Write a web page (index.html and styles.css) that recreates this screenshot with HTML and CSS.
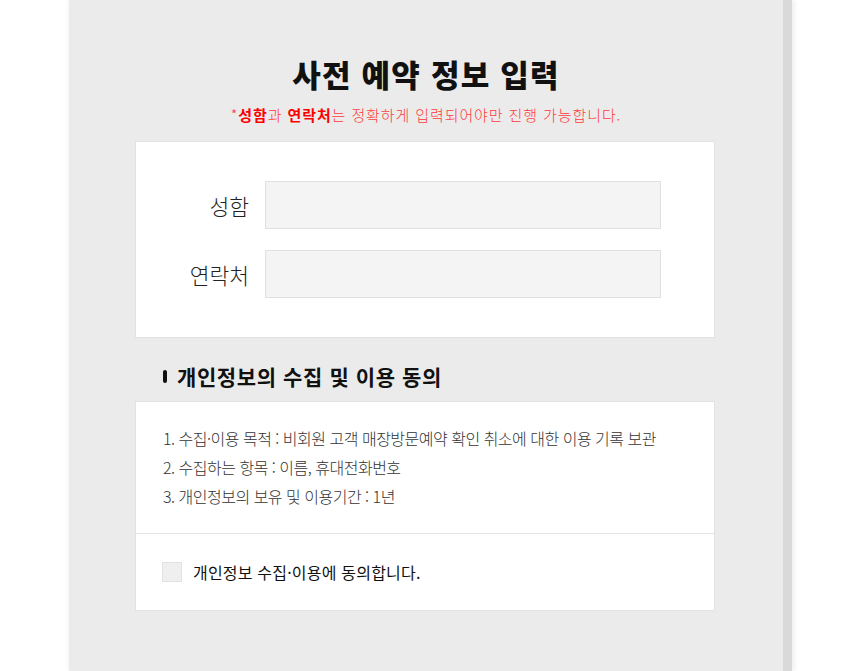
FILE: index.html
```html
<!DOCTYPE html>
<html lang="ko">
<head>
    <meta charset="UTF-8">
    <meta name="viewport" content="width=device-width, initial-scale=1.0">
    <title>사전 예약 정보 입력</title>
    <link rel="stylesheet" href="styles.css">
</head>
<body>

    <div class="panel">
        <h1>사전 예약 정보 입력</h1>
        <p class="notice">*<strong>성함</strong>과 <strong>연락처</strong>는 정확하게 입력되어야만 진행 가능합니다.</p>

        <!-- 입력 폼 -->
        <div class="card form-card">
            <div class="field">
                <label for="name">성함</label>
                <input type="text" id="name">
            </div>
            <div class="field">
                <label for="phone">연락처</label>
                <input type="text" id="phone">
            </div>
        </div>

        <h2 class="section-title">개인정보의 수집 및 이용 동의</h2>

        <div class="card agree-card">
            <ol class="terms">
                <li>1. 수집·이용 목적 : 비회원 고객 매장방문예약 확인 취소에 대한 이용 기록 보관</li>
                <li>2. 수집하는 항목 : 이름, 휴대전화번호</li>
                <li>3. 개인정보의 보유 및 이용기간 : 1년</li>
            </ol>
            <label class="agree">
                <input type="checkbox">
                <span>개인정보 수집·이용에 동의합니다.</span>
            </label>
        </div>
    </div>

</body>
</html>
```

FILE: styles.css
```css
/* General Styles */
body {
    margin: 0;
    padding: 0;
    background-color: #fff;
    font-family: "Noto Sans CJK KR", "Noto Sans", sans-serif;
    color: #222;
}

.panel {
    margin-left: 69px;
    width: 723px; /* 714 + shadow band */
    min-height: 671px;
    padding-top: 56px;
    box-sizing: border-box;
    background-color: #ebebeb;
    border-right: 9px solid #d9d9d9;
    box-shadow: 3px 0 4px rgba(0, 0, 0, 0.06), -2px 0 3px rgba(0, 0, 0, 0.03);
    text-align: center;
}

h1 {
    margin: 0;
    font-size: 31px;
    line-height: 36px;
    font-weight: 900;
    color: #111;
    letter-spacing: 1.2px;
}

.notice {
    margin: 12px 0 16px;
    font-size: 15px;
    line-height: 21px;
    font-weight: 300;
    color: #ff3b3b;
    letter-spacing: 0.9px;
}

.notice strong {
    font-weight: 700;
    color: #f00;
}

/* Cards */
.card {
    width: 580px;
    margin: 0 0 0 66px;
    box-sizing: border-box;
    background-color: #fff;
    border: 1px solid #e2e2e2;
    text-align: left;
}

.form-card {
    padding: 39px 0;
    display: flex;
    flex-direction: column;
    gap: 21px;
}

.field {
    display: flex;
    align-items: center;
}

.field label {
    width: 113px;
    padding-right: 16px;
    text-align: right;
    font-size: 21.5px;
    font-weight: 300;
    color: #222;
    letter-spacing: 0;
}

.field input {
    width: 396px;
    height: 48px;
    box-sizing: border-box;
    margin: 0;
    border: 1px solid #e0e0e0;
    background-color: #f4f4f4;
    outline: none;
}

/* Section title */
.section-title {
    margin: 25px 0 12px 94px;
    display: flex;
    align-items: center;
    gap: 10px;
    font-size: 21px;
    line-height: 26px;
    font-weight: 700;
    color: #111;
    letter-spacing: 0.6px;
}

.section-title::before {
    content: "";
    width: 4px;
    height: 13px;
    border-radius: 2px;
    background-color: #111;
}

.terms {
    list-style: none;
    margin: 0;
    padding: 22px 27px;
    border-bottom: 1px solid #e5e5e5;
}

.terms li {
    font-size: 16px;
    line-height: 29px;
    font-weight: 300;
    color: #333;
    letter-spacing: -0.5px;
}

.agree {
    height: 76px;
    padding: 0 26px;
    display: flex;
    align-items: center;
    gap: 11px;
    font-size: 16px;
    font-weight: 400;
    color: #111;
    letter-spacing: 0.2px;
}

.agree input {
    appearance: none;
    width: 20px;
    height: 20px;
    margin: 0;
    border: 1px solid #e2e2e2;
    background-color: #efefef;
}
```
